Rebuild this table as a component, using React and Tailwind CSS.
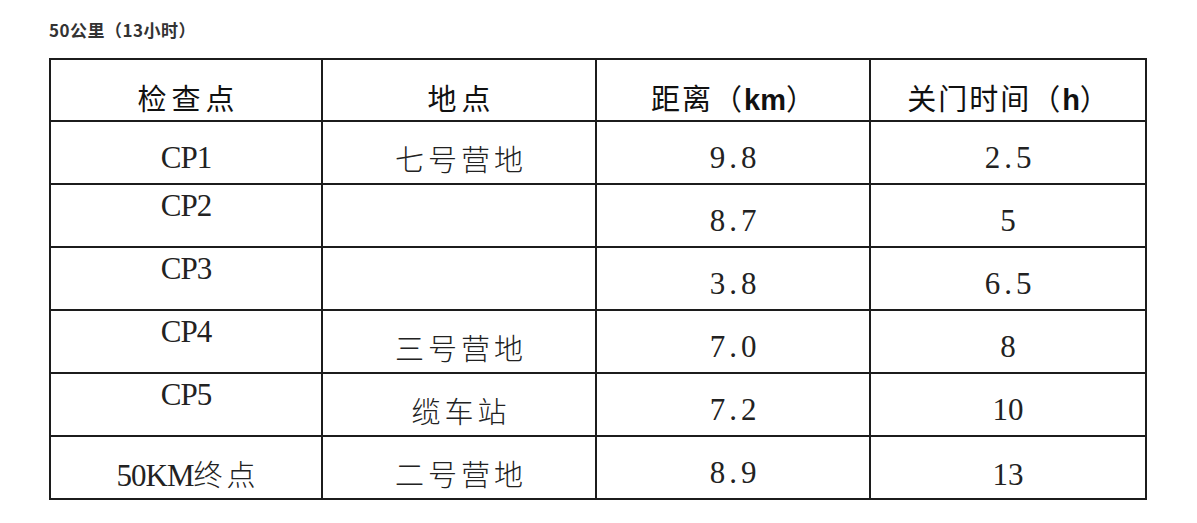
import React from "react";

const latin = "font-['Liberation_Serif','Noto_Sans_CJK_SC',serif]";

function Cjk({ children, cls = "" }) {
  return (
    <span className={`font-['Noto_Sans_CJK_SC',sans-serif] text-[29px] tracking-[4px] mr-[-4px] ${cls}`}>{children}</span>
  );
}

function Num({ value }) {
  const parts = value.split(".");
  if (parts.length === 1) return <span>{value}</span>;
  return (
    <span>
      {parts[0]}
      <span className="px-[4px]">.</span>
      {parts[1]}
    </span>
  );
}

function Cell({ children, pt = "pt-[20px]", last = false }) {
  return (
    <div
      className={`h-[63px] border-b-2 ${last ? "" : "border-r-2"} border-[#1c1c1c] flex justify-center items-start ${pt}`}
    >
      <div className={`leading-[32px] text-[31px] text-[#222] whitespace-nowrap ${latin}`}>{children}</div>
    </div>
  );
}

function HCell({ children, last = false }) {
  return (
    <div
      className={`h-[62px] border-b-2 ${last ? "" : "border-r-2"} border-[#1c1c1c] flex justify-center items-start pt-[21px]`}
    >
      <div className="leading-[32px] text-[29px] text-[#111] font-['Noto_Sans_CJK_SC',sans-serif] whitespace-nowrap">
        {children}
      </div>
    </div>
  );
}

const rows = [
  { cp: "CP1", cpTop: false, place: "七号营地", dist: "9.8", time: "2.5" },
  { cp: "CP2", cpTop: true, place: "", dist: "8.7", time: "5" },
  { cp: "CP3", cpTop: true, place: "", dist: "3.8", time: "6.5" },
  { cp: "CP4", cpTop: true, place: "三号营地", dist: "7.0", time: "8" },
  { cp: "CP5", cpTop: true, place: "缆车站", dist: "7.2", time: "10" },
  { cp: "50KM", cpTop: false, cpCjk: "终点", place: "二号营地", dist: "8.9", time: "13", timePt: "pt-[22px]" },
];

export default function App() {
  return (
    <div className="bg-white w-[1197px] h-[523px] pl-[49px] pt-[18px]">
      <div className="h-[24px] leading-[24px] text-[17px] tracking-[0.5px] font-bold text-[#333] font-['Noto_Sans_CJK_SC',sans-serif]">
        50公里（13小时）
      </div>
      <div className="mt-[16px] w-[1098px] border-t-2 border-l-2 border-r-2 border-[#1c1c1c] grid grid-cols-[272px_274px_274px_274px]">
        <HCell>
          <span className="tracking-[5px] mr-[-5px]">检查点</span>
        </HCell>
        <HCell>
          <span className="tracking-[5px] mr-[-5px]">地点</span>
        </HCell>
        <HCell>
          <span className="tracking-[2px]">距离（</span>
          <span className="font-['Liberation_Sans',sans-serif] font-bold">km</span>
          <span>）</span>
        </HCell>
        <HCell last>
          <span className="tracking-[2px]">关门时间（</span>
          <span className="font-['Liberation_Sans',sans-serif] font-bold">h</span>
          <span>）</span>
        </HCell>
        {rows.map((r, i) => (
          <React.Fragment key={i}>
            <Cell pt={r.cpTop ? "pt-[5px]" : "pt-[20px]"}>
              <span className="tracking-[-1px]">{r.cp}</span>
              {r.cpCjk && <Cjk cls="font-light">{r.cpCjk}</Cjk>}
            </Cell>
            <Cell>{r.place && <Cjk cls="font-light">{r.place}</Cjk>}</Cell>
            <Cell>
              <Num value={r.dist} />
            </Cell>
            <Cell pt={r.timePt || "pt-[20px]"} last>
              <Num value={r.time} />
            </Cell>
          </React.Fragment>
        ))}
      </div>
    </div>
  );
}
